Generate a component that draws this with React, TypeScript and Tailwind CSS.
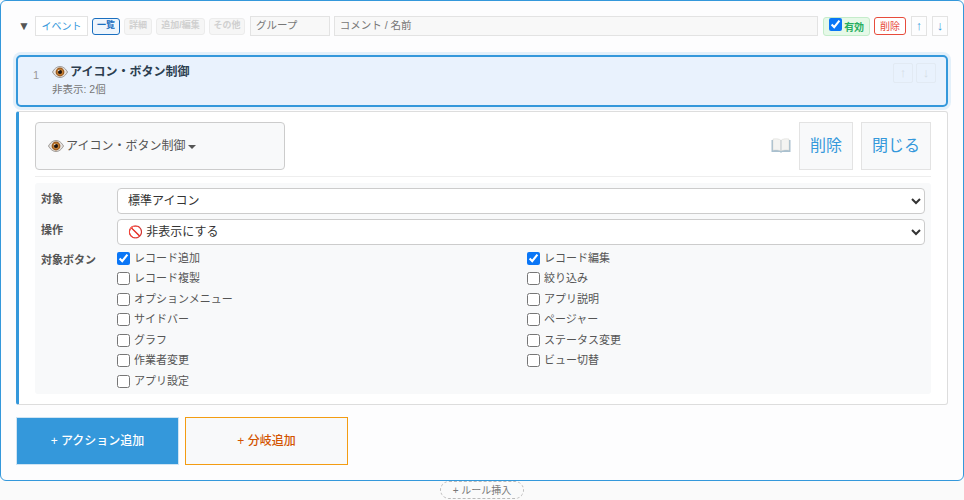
const leftButtons = ['レコード追加', 'レコード複製', 'オプションメニュー', 'サイドバー', 'グラフ', '作業者変更', 'アプリ設定'];
const rightButtons = ['レコード編集', '絞り込み', 'アプリ説明', 'ページャー', 'ステータス変更', 'ビュー切替'];

function Eye() {
  return (
    <svg viewBox="0 0 16 12" className="h-[12px] w-[16px] shrink-0">
      <path d="M0.5 6 C3 1.5 6 0.5 8 0.5 C10 0.5 13 1.5 15.5 6 C13 10.5 10 11.5 8 11.5 C6 11.5 3 10.5 0.5 6 Z" fill="#e6e3e0" stroke="#77716c" strokeWidth="0.7" />
      <circle cx="8" cy="6" r="4.4" fill="#9a5a1e" />
      <circle cx="8" cy="6" r="3.2" fill="#c27f35" />
      <circle cx="8" cy="6" r="2" fill="#1c1410" />
      <circle cx="6.8" cy="4.6" r="0.7" fill="#ffffff" />
    </svg>
  );
}

function Book() {
  return (
    <svg viewBox="0 0 20 16" className="h-[16px] w-[20px]">
      <path d="M0.5 2 H19.5 V14 H11 L10 15 L9 14 H0.5 Z" fill="#a9c0cf" />
      <path d="M2 1 C5 0.5 8 0.8 9.7 2 V13 C8 12 5 11.8 2 12.2 Z" fill="#f4f4f2" stroke="#cfcfcb" strokeWidth="0.4" />
      <path d="M18 1 C15 0.5 12 0.8 10.3 2 V13 C12 12 15 11.8 18 12.2 Z" fill="#f4f4f2" stroke="#cfcfcb" strokeWidth="0.4" />
    </svg>
  );
}

function Check({ label, checked }: { label: string; checked?: boolean }) {
  return (
    <label className="flex h-[20.5px] items-center gap-[4px] text-[11px] text-[#555]">
      <input type="checkbox" defaultChecked={checked} className="m-0 h-[13px] w-[13px] accent-[#0a76f6]" />
      <span className="-mt-[1px]">{label}</span>
    </label>
  );
}

function Tab({ label, width, active }: { label: string; width: string; active?: boolean }) {
  if (active) {
    return <span className={`flex h-[17px] items-center justify-center whitespace-nowrap rounded-[3px] border border-[#1a6fc0] bg-[#eef5fc] text-[9px] font-bold text-[#1a6fc0] ${width}`}>{label}</span>;
  }
  return <span className={`flex h-[17px] items-center justify-center whitespace-nowrap rounded-[3px] border border-[#ececec] bg-[#f6f6f6] text-[9px] font-bold text-[#d0d0d0] ${width}`}>{label}</span>;
}

export default function App() {
  return (
    <div className="h-[500px] w-[964px] overflow-hidden bg-[#fafafa] font-['Liberation_Sans','Noto_Sans_CJK_JP',sans-serif]">
      <div className="h-[481px] rounded-[6px] border border-[#3498db] bg-[#fdfdfe] px-[15px] pt-[15px]">
        {/* ヘッダー */}
        <div className="flex h-[20px] items-center">
          <span className="ml-[2px] w-[17px] text-[12px] leading-none text-[#555]">▼</span>
          <span className="flex h-[20px] w-[53px] items-center justify-center border border-[#e3e3e3] bg-white text-[10px] text-[#3498db]">イベント</span>
          <div className="ml-[4px] flex items-center gap-[4px]">
            <Tab label="一覧" width="w-[28px]" active />
            <Tab label="詳細" width="w-[28px]" />
            <Tab label="追加/編集" width="w-[49px]" />
            <Tab label="その他" width="w-[36px]" />
          </div>
          <div className="ml-[5px] flex h-[20px] w-[80px] items-center border border-[#e3e3e3] bg-[#f8f8f8] px-[5px] text-[10.5px] text-[#777]">グループ</div>
          <div className="ml-[4px] flex h-[20px] w-[485px] items-center border border-[#e3e3e3] bg-[#f8f8f8] px-[5px] text-[10.5px] text-[#777]">コメント / 名前</div>
          <label className="ml-[5px] flex h-[19px] w-[47px] items-center rounded-[3px] border border-[#c5eccb] bg-[#e6f9e8] pl-[5px] text-[10px] font-bold text-[#27ae60]">
            <input type="checkbox" defaultChecked className="m-0 -mt-[3px] h-[13px] w-[13px] accent-[#0a76f6]" />
            <span className="ml-[2px] mt-[2px] whitespace-nowrap">有効</span>
          </label>
          <span className="ml-[4px] flex h-[18px] w-[32px] items-center justify-center rounded-[3px] border border-[#e74c3c] bg-white text-[10px] text-[#e74c3c]">削除</span>
          <span className="ml-[5px] flex h-[20px] w-[16px] items-center justify-center border border-[#e3e3e3] text-[13px] font-bold text-[#3498db]">↑</span>
          <span className="ml-[5px] flex h-[20px] w-[16px] items-center justify-center border border-[#e3e3e3] text-[13px] font-bold text-[#3498db]">↓</span>
        </div>

        {/* 選択中のアクション */}
        <div className="mt-[19px] flex h-[52px] w-[932px] items-start rounded-[5px] border-2 border-[#3498db] bg-[#e9f2fd] shadow-[0_0_0_3px_#e3f0fa]">
          <span className="ml-[15px] mt-[10px] w-[19px] text-[11px] text-[#999]">1</span>
          <div className="flex-1">
            <div className="mt-[6px] flex items-center text-[12px] font-bold text-[#2c3e50]">
              <Eye />
              <span className="ml-[2px]">アイコン・ボタン制御</span>
            </div>
            <div className="mt-[1px] text-[10.5px] text-[#777]">非表示: 2個</div>
          </div>
          <div className="mr-[10px] mt-[6px] flex gap-[3px]">
            <span className="flex h-[20px] w-[20px] items-center justify-center rounded-[2px] border border-[#e2eaf3] text-[13px] font-bold text-[#d5dde6]">↑</span>
            <span className="flex h-[20px] w-[20px] items-center justify-center rounded-[2px] border border-[#e2eaf3] text-[13px] font-bold text-[#d5dde6]">↓</span>
          </div>
        </div>

        {/* 編集パネル */}
        <div className="mt-[4px] h-[294px] w-[932px] rounded-[3px] border border-[#ddd] border-l-[3px] border-l-[#3498db] bg-white pl-[16px] pr-[16px] pt-[10px]">
          <div className="flex h-[55px] items-start border-b border-[#eee] pb-[6px]">
            <div className="flex h-[48px] w-[250px] items-center rounded-[4px] border border-[#ccc] bg-[#f8f9fa] pl-[12px] text-[12px] text-[#555]">
              <Eye />
              <span className="ml-[2px]">アイコン・ボタン制御</span>
              <span className="ml-[3px] mt-[2px] h-0 w-0 border-x-[4px] border-t-[4px] border-x-transparent border-t-[#555]" />
            </div>
            <div className="flex-1" />
            <span className="mr-[8px] mt-[16px]"><Book /></span>
            <span className="flex h-[48px] w-[54px] items-center justify-center border border-[#e3e3e3] bg-[#f8f9fa] text-[16px] text-[#3498db]">削除</span>
            <span className="ml-[8px] flex h-[48px] w-[70px] items-center justify-center border border-[#e3e3e3] bg-[#f8f9fa] text-[16px] text-[#3498db]">閉じる</span>
          </div>

          <div className="mt-[6px] h-[211px] rounded-[3px] bg-[#f8f9fa] px-[6px] pt-[5px]">
            <div className="flex h-[26px] items-start">
              <span className="w-[76px] pt-[3px] text-[11px] font-bold text-[#555]">対象</span>
              <select className="h-[26px] w-[808px] rounded-[4px] border border-[#ccc] bg-white pl-[6px] text-[12px] text-[#333]" defaultValue="標準アイコン">
                <option>標準アイコン</option>
              </select>
            </div>
            <div className="mt-[5px] flex h-[26px] items-start">
              <span className="w-[76px] pt-[3px] text-[11px] font-bold text-[#555]">操作</span>
              <select className="h-[26px] w-[808px] rounded-[4px] border border-[#ccc] bg-white pl-[6px] text-[12px] text-[#333]" defaultValue="🚫 非表示にする">
                <option>🚫 非表示にする</option>
              </select>
            </div>
            <div className="mt-[3px] flex">
              <span className="w-[76px] pt-[4px] text-[11px] font-bold text-[#555]">対象ボタン</span>
              <div className="grid w-[808px] grid-cols-2 gap-x-[2px]">
                <div>{leftButtons.map((b, i) => <Check key={b} label={b} checked={i === 0} />)}</div>
                <div className="pl-[5px]">{rightButtons.map((b, i) => <Check key={b} label={b} checked={i === 0} />)}</div>
              </div>
            </div>
          </div>
        </div>

        {/* 追加ボタン */}
        <div className="mt-[12px] flex gap-[6px]">
          <button className="h-[48px] w-[163px] border border-[#cfe4f3] bg-[#3498db] text-[12px] font-medium text-white">+ アクション追加</button>
          <button className="h-[48px] w-[163px] border border-[#f39c12] bg-[#f8f9fa] text-[12px] font-medium text-[#d35400]">+ 分岐追加</button>
        </div>
      </div>

      <div className="flex justify-center">
        <span className="flex h-[18px] w-[84px] items-center justify-center rounded-[9px] border border-dashed border-[#bbb] text-[10px] text-[#777]">+ ルール挿入</span>
      </div>
    </div>
  );
}
